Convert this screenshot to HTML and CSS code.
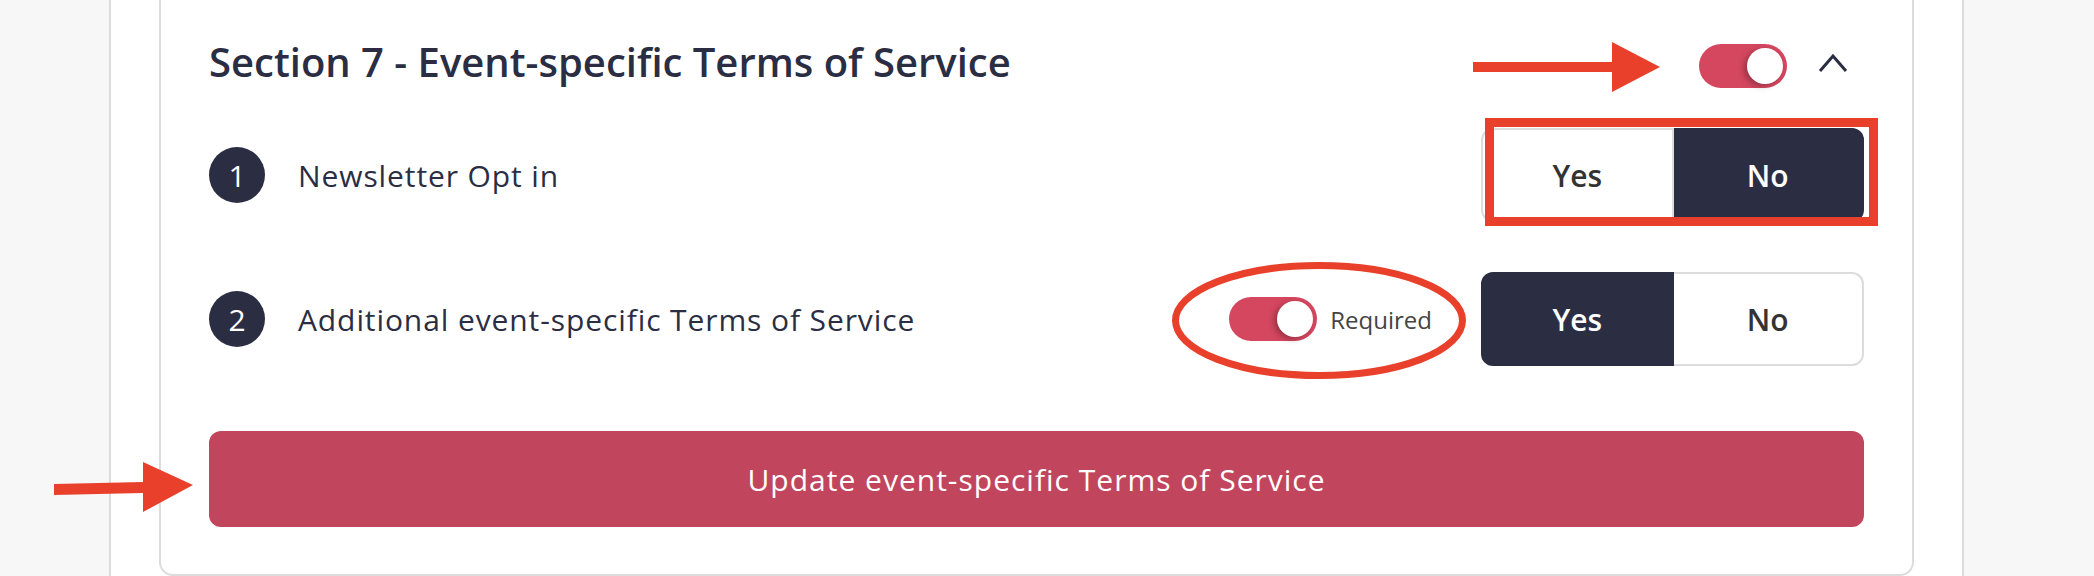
FILE: index.html
```html
<!DOCTYPE html>
<html lang="en">
<head>
<meta charset="utf-8">
<title>Section 7 - Event-specific Terms of Service</title>
<link rel="stylesheet" href="styles.css">
</head>
<body>
<div class="page">
  <div class="panel">
    <section class="card">
      <header class="card-head">
        <h2 class="title">Section 7 - Event-specific Terms of Service</h2>
        <div class="head-controls">
          <span class="toggle"></span>
          <svg class="chevron" width="30" height="20" viewBox="0 0 30 20"><polyline points="2,18 15,3 28,18" fill="none" stroke="#2b2e43" stroke-width="3"/></svg>
        </div>
      </header>

      <div class="item">
        <span class="num">1</span>
        <span class="label">Newsletter Opt in</span>
        <div class="choice">
          <span class="opt yes">Yes</span>
          <span class="opt no on">No</span>
        </div>
      </div>

      <div class="item">
        <span class="num">2</span>
        <span class="label">Additional event-specific Terms of Service</span>
        <div class="req">
          <span class="toggle"></span>
          <span class="req-text">Required</span>
        </div>
        <div class="choice">
          <span class="opt yes on">Yes</span>
          <span class="opt no">No</span>
        </div>
      </div>

      <button class="update">Update event-specific Terms of Service</button>
    </section>
  </div>

  <svg class="marks" width="2094" height="576" viewBox="0 0 2094 576">
    <polygon points="1473,62 1612,62 1612,42 1660,67 1612,92 1612,72 1473,72" fill="#e8402a"/>
    <rect x="1489.5" y="122.5" width="384" height="99" fill="none" stroke="#e8402a" stroke-width="9"/>
    <ellipse cx="1319" cy="320.5" rx="143.5" ry="55" fill="none" stroke="#e8402a" stroke-width="7"/>
    <polygon points="54,484 143,482 143,462 193,485 143,512 143,493 54,495" fill="#e8402a"/>
  </svg>
</div>
</body>
</html>
```

FILE: styles.css
```css
html, body {
  margin: 0;
  padding: 0;
}

body {
  background: #f7f7f7;
  font-family: "Open Sans", "Noto Sans", sans-serif;
  color: #2b2e43;
  height: 576px;
  overflow: hidden;
}

.page {
  position: relative;
  width: 2094px;
  height: 576px;
}

.panel {
  box-sizing: border-box;
  margin-left: 109px;
  width: 1855px;
  height: 576px;
  padding: 0 48px;
  background: #fff;
  border-left: 2px solid #dcdcdc;
  border-right: 2px solid #dcdcdc;
}

.card {
  box-sizing: border-box;
  height: 576px;
  padding: 44px 48px 47px;
  border: 2px solid #dcdcdc;
  border-top: none;
  border-radius: 0 0 14px 14px;
  display: flex;
  flex-direction: column;
}

.card-head {
  display: flex;
  align-items: flex-start;
  height: 44px;
  margin-bottom: 40px;
}

.title {
  flex: 1;
  margin: 0;
  font-size: 40px;
  font-weight: 600;
  line-height: 35px;
  color: #2b2e43;
}

.head-controls {
  display: flex;
  align-items: center;
  height: 44px;
}

.chevron {
  display: block;
  margin-left: 31px;
  margin-right: 16px;
  margin-top: -6px;
}

.toggle {
  position: relative;
  display: block;
  width: 88px;
  height: 44px;
  border-radius: 22px;
  background: #d5475f;
  flex: none;
}

.toggle::after {
  content: "";
  position: absolute;
  top: 4px;
  right: 4px;
  width: 36px;
  height: 36px;
  border-radius: 50%;
  background: #fff;
  box-shadow: -3px 2px 6px rgba(0, 0, 0, 0.3);
}

.item {
  display: flex;
  align-items: center;
  height: 94px;
}

.item + .item {
  margin-top: 50px;
}

.num {
  flex: none;
  width: 56px;
  height: 56px;
  border-radius: 50%;
  background: #2b2e43;
  color: #fff;
  font-size: 30px;
  display: flex;
  align-items: center;
  justify-content: center;
  margin-right: 33px;
}

.label {
  flex: 1;
  font-size: 30px;
  letter-spacing: 0.9px;
  color: #2b2e43;
}

.req {
  display: flex;
  align-items: center;
  margin-right: 49px;
}

.req-text {
  margin-left: 13px;
  font-size: 24px;
  color: #444;
}

.choice {
  flex: none;
  display: flex;
  width: 383px;
  height: 94px;
}

.opt {
  flex: 1;
  display: flex;
  align-items: center;
  justify-content: center;
  border: 2px solid #dcdcdc;
  background: #fff;
  color: #333;
  font-size: 30px;
  font-weight: 600;
}

.opt.yes {
  border-radius: 12px 0 0 12px;
}

.opt.no {
  border-left: none;
  border-radius: 0 12px 12px 0;
}

.opt.on {
  background: #2b2e43;
  border-color: #2b2e43;
  color: #fff;
}

.update {
  margin-top: 65px;
  height: 96px;
  border: none;
  border-radius: 12px;
  background: #c1465d;
  color: #fff;
  font-family: "Open Sans", "Noto Sans", sans-serif;
  font-size: 30px;
  font-weight: 400;
  letter-spacing: 1px;
  padding: 0;
}

.marks {
  position: absolute;
  left: 0;
  top: 0;
  pointer-events: none;
}
```
